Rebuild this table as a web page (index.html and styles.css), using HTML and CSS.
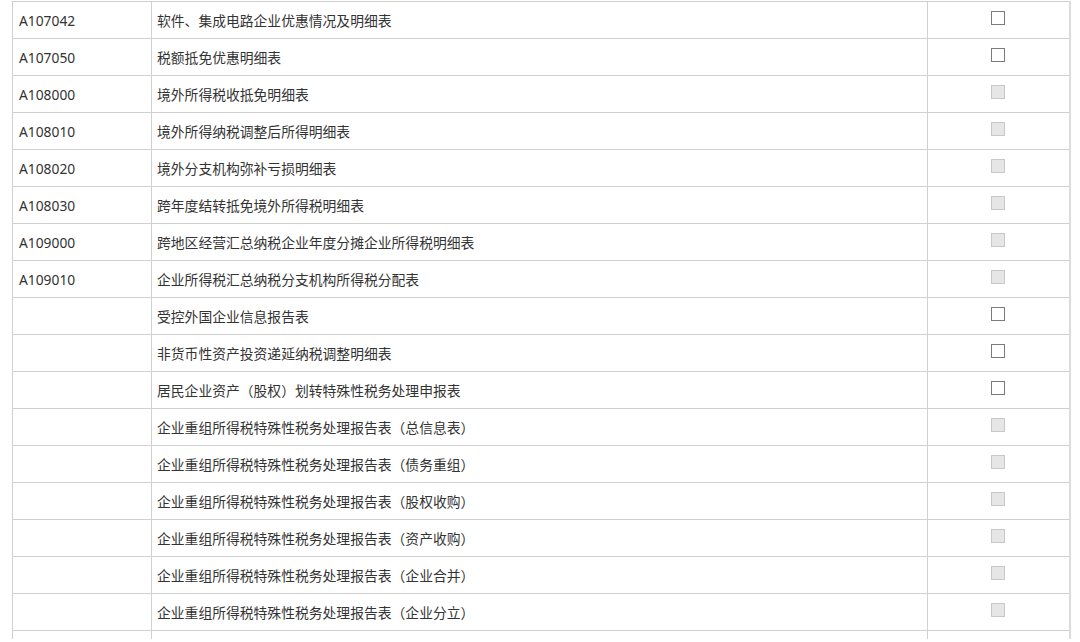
FILE: index.html
```html
<!DOCTYPE html>
<html lang="zh-CN">
<head>
<meta charset="utf-8">
<link rel="stylesheet" href="styles.css">
</head>
<body>
<div class="wrap">
<table class="grid">
<colgroup><col class="c-code"><col class="c-name"><col class="c-check"></colgroup>
<tbody>
<tr><td class="code">A107042</td><td class="name">软件、集成电路企业优惠情况及明细表</td><td class="chk"><span class="box"></span></td></tr>
<tr><td class="code">A107050</td><td class="name">税额抵免优惠明细表</td><td class="chk"><span class="box"></span></td></tr>
<tr><td class="code">A108000</td><td class="name">境外所得税收抵免明细表</td><td class="chk"><span class="box off"></span></td></tr>
<tr><td class="code">A108010</td><td class="name">境外所得纳税调整后所得明细表</td><td class="chk"><span class="box off"></span></td></tr>
<tr><td class="code">A108020</td><td class="name">境外分支机构弥补亏损明细表</td><td class="chk"><span class="box off"></span></td></tr>
<tr><td class="code">A108030</td><td class="name">跨年度结转抵免境外所得税明细表</td><td class="chk"><span class="box off"></span></td></tr>
<tr><td class="code">A109000</td><td class="name">跨地区经营汇总纳税企业年度分摊企业所得税明细表</td><td class="chk"><span class="box off"></span></td></tr>
<tr><td class="code">A109010</td><td class="name">企业所得税汇总纳税分支机构所得税分配表</td><td class="chk"><span class="box off"></span></td></tr>
<tr><td class="code"></td><td class="name">受控外国企业信息报告表</td><td class="chk"><span class="box"></span></td></tr>
<tr><td class="code"></td><td class="name">非货币性资产投资递延纳税调整明细表</td><td class="chk"><span class="box"></span></td></tr>
<tr><td class="code"></td><td class="name">居民企业资产（股权）划转特殊性税务处理申报表</td><td class="chk"><span class="box"></span></td></tr>
<tr><td class="code"></td><td class="name">企业重组所得税特殊性税务处理报告表（总信息表）</td><td class="chk"><span class="box off"></span></td></tr>
<tr><td class="code"></td><td class="name">企业重组所得税特殊性税务处理报告表（债务重组）</td><td class="chk"><span class="box off"></span></td></tr>
<tr><td class="code"></td><td class="name">企业重组所得税特殊性税务处理报告表（股权收购）</td><td class="chk"><span class="box off"></span></td></tr>
<tr><td class="code"></td><td class="name">企业重组所得税特殊性税务处理报告表（资产收购）</td><td class="chk"><span class="box off"></span></td></tr>
<tr><td class="code"></td><td class="name">企业重组所得税特殊性税务处理报告表（企业合并）</td><td class="chk"><span class="box off"></span></td></tr>
<tr><td class="code"></td><td class="name">企业重组所得税特殊性税务处理报告表（企业分立）</td><td class="chk"><span class="box off"></span></td></tr>
<tr class="tail"><td></td><td></td><td></td></tr>
</tbody>
</table>
</div>
</body>
</html>
```
FILE: styles.css
```css
html, body {
  margin: 0;
  padding: 0;
  background: #ffffff;
}
body {
  font-family: "Noto Sans", "Noto Sans CJK SC", sans-serif;
  color: #333333;
  font-size: 13.8px;
}
.wrap {
  padding: 1px 0 0 12px;
  height: 641px;
  overflow: hidden;
}
.grid {
  border-collapse: collapse;
  table-layout: fixed;
  width: 1057px;
}
.c-code { width: 139px; }
.c-name { width: 776px; }
.c-check { width: 142px; }
.grid td {
  border: 1px solid #d0d0d0;
  height: 37px;
  padding: 0;
  vertical-align: middle;
  line-height: 20px;
  box-sizing: border-box;
}
.grid td:last-child {
  border-right: 2px solid #dcdcdc;
}
.grid td.code {
  padding-left: 6px;
  padding-top: 1px;
}
.grid td.name {
  padding-left: 5px;
  padding-top: 1px;
}
.grid td.chk {
  text-align: center;
}
.box {
  display: inline-block;
  width: 14px;
  height: 14px;
  box-sizing: border-box;
  border: 1px solid #7b7b7b;
  background: #ffffff;
  vertical-align: middle;
  margin-bottom: 5px;
}
.box.off {
  border-color: #c8c8c8;
  background: #e6e6e6;
}
.grid tr.tail td {
  height: 8px;
  border-bottom: none;
}
```
